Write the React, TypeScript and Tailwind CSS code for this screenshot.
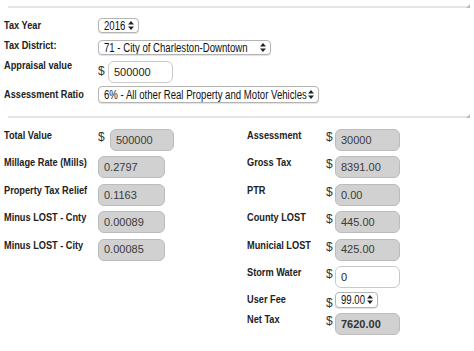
import React from "react";

const labelText = "inline-block whitespace-nowrap origin-left scale-x-[0.8] font-['Liberation_Sans',sans-serif] font-bold text-[11.5px] leading-[14px] text-[#222]";
const dollar = "font-['Liberation_Sans',sans-serif] text-[12px] leading-[14px] text-[#333]";

const Label = ({ text, w, className = "" }: { text: string; w: string; className?: string }) => (
    <div className={`${w} shrink-0 flex h-[14px] ${className}`}>
        <span className={labelText}>{text}</span>
    </div>
);

const Arrows = () => (
    <svg width="6" height="9" viewBox="0 0 6 9" className="shrink-0">
        <path d="M3 0 L6 3.6 L0 3.6 Z" fill="#222" />
        <path d="M3 9 L6 5.4 L0 5.4 Z" fill="#222" />
    </svg>
);

const Select = ({ text, w, h }: { text: string; w: string; h: string }) => (
    <div
        className={`${w} ${h} flex items-center pl-[5px] pr-[4px] bg-white border border-[#b4b4b4] rounded-[4px] shadow-[0_1px_1px_rgba(0,0,0,0.12)] overflow-hidden`}
    >
        <div className="flex-1 min-w-0 flex">
            <span className="inline-block whitespace-nowrap origin-left scale-x-[0.8] font-['Liberation_Sans',sans-serif] text-[12px] leading-[14px] text-[#111]">
                {text}
            </span>
        </div>
        <Arrows />
    </div>
);

const Field = ({ value, w = "w-[67px]", white = false, bold = false }: { value: string; w?: string; white?: boolean; bold?: boolean }) => (
    <div
        className={`${w} h-[22px] shrink-0 flex items-center pl-[5px] rounded-[6px] border font-['Liberation_Sans',sans-serif] text-[11px] ${
            white ? "bg-white border-[#c9c9c9] text-[#222]" : "bg-[#d1d1d1] border-[#bcbcbc] text-[#3a3a3a]"
        } ${bold ? "font-bold text-[#333]" : ""}`}
    >
        {value}
    </div>
);

const Rule = () => (
    <div className="flex items-end ml-[8px] mr-[4px]">
        <div className="flex-1 border-t-2 border-[#e6e6e6]" />
        <svg width="4" height="4" viewBox="0 0 4 4" className="-ml-[4px]">
            <path d="M4 0 L4 4 L0 4 Z" fill="#bdbdbd" />
        </svg>
    </div>
);

export default function App() {
    return (
        <div className="w-[474px] h-[351px] bg-white overflow-hidden pt-[4px]">
            <Rule />

            <div className="pl-[4px] mt-[10px] flex flex-col">
                <div className="flex items-start">
                    <Label text="Tax Year" w="w-[94px]" />
                    <Select text="2016" w="w-[41px]" h="h-[15px]" />
                </div>
                <div className="flex items-start mt-[5px]">
                    <Label text="Tax District:" w="w-[94px]" />
                    <div className="mt-[2px]">
                        <Select text="71 - City of Charleston-Downtown" w="w-[173px]" h="h-[15px]" />
                    </div>
                </div>
                <div className="flex items-start mt-[3px]">
                    <Label text="Appraisal value" w="w-[94px]" />
                    <div className="flex items-start mt-[3px]">
                        <span className={`${dollar} mt-[3px] w-[10px]`}>$</span>
                        <Field value="500000" w="w-[65px]" white />
                    </div>
                </div>
                <div className="flex items-start mt-[3px]">
                    <Label text="Assessment Ratio" w="w-[94px]" className="mt-[1px]" />
                    <Select text="6% - All other Real Property and Motor Vehicles" w="w-[221px]" h="h-[17px]" />
                </div>
            </div>

            <div className="mt-[11px]">
                <Rule />
            </div>

            <div className="pl-[4px] mt-[11px] grid grid-cols-[243px_1fr]">
                <div className="flex flex-col gap-[5.4px]">
                    <div className="flex items-start h-[22px]">
                        <Label text="Total Value" w="w-[94px]" className="-mt-[1px]" />
                        <span className={`${dollar} w-[12px] mt-[1px]`}>$</span>
                        <Field value="500000" w="w-[64px]" />
                    </div>
                    {[
                        ["Millage Rate (Mills)", "0.2797"],
                        ["Property Tax Relief", "0.1163"],
                        ["Minus LOST - Cnty", "0.00089"],
                        ["Minus LOST - City", "0.00085"],
                    ].map(([name, value]) => (
                        <div key={name} className="flex items-start h-[22px]">
                            <Label text={name} w="w-[94px]" className="-mt-[1px]" />
                            <Field value={value} />
                        </div>
                    ))}
                </div>

                <div className="flex flex-col gap-[5.4px]">
                    {[
                        ["Assessment", "30000"],
                        ["Gross Tax", "8391.00"],
                        ["PTR", "0.00"],
                        ["County LOST", "445.00"],
                        ["Municial LOST", "425.00"],
                    ].map(([name, value]) => (
                        <div key={name} className="flex items-start h-[22px]">
                            <Label text={name} w="w-[79px]" className="-mt-[1px]" />
                            <span className={`${dollar} w-[9px] mt-[1px]`}>$</span>
                            <Field value={value} w="w-[65px]" />
                        </div>
                    ))}
                    <div className="flex items-start h-[22px]">
                        <Label text="Storm Water" w="w-[79px]" className="-mt-[1px]" />
                        <span className={`${dollar} w-[9px] mt-[1px]`}>$</span>
                        <Field value="0" w="w-[65px]" white />
                    </div>
                    <div className="flex items-start h-[16px] -mt-[1.5px]">
                        <Label text="User Fee" w="w-[79px]" className="mt-[0px]" />
                        <span className={`${dollar} w-[9px] mt-[4px]`}>$</span>
                        <Select text="99.00" w="w-[43px]" h="h-[16px]" />
                    </div>
                    <div className="flex items-start h-[22px]">
                        <Label text="Net Tax" w="w-[79px]" className="-mt-[1px]" />
                        <span className={`${dollar} w-[9px] mt-[1px]`}>$</span>
                        <Field value="7620.00" w="w-[65px]" bold />
                    </div>
                </div>
            </div>
        </div>
    );
}
